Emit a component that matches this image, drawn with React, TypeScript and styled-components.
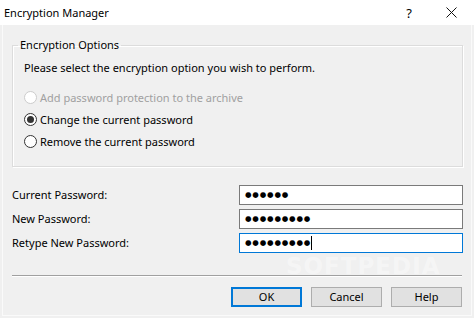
import React from "react";
import styled, { createGlobalStyle } from "styled-components";

const Global = createGlobalStyle`
  html, body { margin: 0; padding: 0; background: #f0f0f0; }
  body { font-family: "Noto Sans", "Open Sans", sans-serif; }
`;

const Window = styled.div`
  width: 474px;
  height: 318px;
  display: flex;
  flex-direction: column;
  background: #f0f0f0;
  font-family: "Noto Sans", sans-serif;
  font-size: 11px;
  color: #000;
  overflow: hidden;
  position: relative;
`;

const TitleBar = styled.div`
  height: 25px;
  flex: none;
  background: #fff;
  display: flex;
  align-items: center;
  padding-left: 4px;
`;

const Title = styled.div`
  flex: 1;
  font-size: 11px;
  line-height: 16px;
`;

const TitleButton = styled.div<{ $w: number }>`
  width: ${(p) => p.$w}px;
  height: 25px;
  display: flex;
  align-items: center;
  justify-content: center;
  font-size: 13px;
`;

const Body = styled.div`
  flex: 1;
  display: flex;
  flex-direction: column;
  padding: 13px 8px 0 9px;
  margin: 0 2px 2px 2px;
  border-left: 1px solid #fafafa;
  border-right: 1px solid #fafafa;
  border-bottom: 1px solid #fafafa;
`;

const Group = styled.fieldset`
  margin: 0;
  padding: 8px 10px 14px 11px;
  border: 1px solid #dcdcdc;
  box-shadow: inset 1px 1px 0 #fff, 1px 1px 0 #fff;
  display: flex;
  flex-direction: column;
`;

const Legend = styled.legend`
  padding: 0 2px;
  margin-left: -6px;
  line-height: 14px;
`;

const Description = styled.div`
  line-height: 16px;
  margin-bottom: 10px;
`;

const RadioRow = styled.div<{ $disabled?: boolean }>`
  height: 22px;
  display: flex;
  align-items: center;
  gap: 3px;
  color: ${(p) => (p.$disabled ? "#a0a0a0" : "#000")};
`;

const RadioCircle = styled.span<{ $disabled?: boolean; $checked?: boolean }>`
  width: 13px;
  height: 13px;
  box-sizing: border-box;
  border-radius: 50%;
  border: 1px solid ${(p) => (p.$disabled ? "#cccccc" : "#333")};
  background: #fff;
  display: flex;
  align-items: center;
  justify-content: center;
  &::after {
    content: "";
    width: 7px;
    height: 7px;
    border-radius: 50%;
    background: ${(p) => (p.$checked ? "#333" : "transparent")};
  }
`;

const Fields = styled.div`
  margin-top: 18px;
  display: grid;
  grid-template-columns: 227px 1fr;
  row-gap: 4px;
  align-items: center;
`;

const FieldLabel = styled.div`
  line-height: 16px;
`;

const PasswordBox = styled.div<{ $focused?: boolean }>`
  height: 20px;
  box-sizing: border-box;
  background: #fff;
  border: 1px solid ${(p) => (p.$focused ? "#0078d7" : "#7a7a7a")};
  display: flex;
  align-items: center;
  padding-left: 5px;
`;

const Dots = styled.span`
  font-family: "DejaVu Sans", sans-serif;
  font-size: 7.5px;
  letter-spacing: 0.8px;
  line-height: 10px;
`;

const Caret = styled.span`
  width: 1px;
  height: 14px;
  background: #000;
`;

const Separator = styled.div`
  margin-top: 22px;
  margin-right: 1px;
  height: 1px;
  background: #a0a0a0;
  border-bottom: 1px solid #fff;
`;

const ButtonRow = styled.div`
  margin-top: 10px;
  display: flex;
  justify-content: flex-end;
  gap: 9px;
  padding-right: 1px;
`;

const Button = styled.div<{ $default?: boolean }>`
  width: 71px;
  height: 20px;
  box-sizing: border-box;
  background: #e1e1e1;
  border: ${(p) => (p.$default ? "2px solid #0078d7" : "1px solid #adadad")};
  display: flex;
  align-items: center;
  justify-content: center;
  line-height: 16px;
`;

const Watermark = styled.div`
  position: absolute;
  left: 286px;
  top: 253px;
  font-family: "DejaVu Sans", sans-serif;
  font-weight: bold;
  font-size: 23px;
  letter-spacing: 1px;
  color: rgba(255, 255, 255, 0.4);
  pointer-events: none;
`;

const radios = [
  { label: "Add password protection to the archive", disabled: true, checked: false },
  { label: "Change the current password", disabled: false, checked: true },
  { label: "Remove the current password", disabled: false, checked: false },
];

const fields = [
  { label: "Current Password:", count: 6, focused: false },
  { label: "New Password:", count: 9, focused: false },
  { label: "Retype New Password:", count: 9, focused: true },
];

export default function App() {
  return (
    <>
      <Global />
      <Window>
        <TitleBar>
          <Title>Encryption Manager</Title>
          <TitleButton $w={38}>?</TitleButton>
          <TitleButton $w={46}>
            <svg width="11" height="11" viewBox="0 0 11 11">
              <path d="M0.5 0.5 L10.5 10.5 M10.5 0.5 L0.5 10.5" stroke="#111" strokeWidth="1" fill="none" />
            </svg>
          </TitleButton>
        </TitleBar>
        <Body>
          <Group>
            <Legend>Encryption Options</Legend>
            <Description>Please select the encryption option you wish to perform.</Description>
            {radios.map((r) => (
              <RadioRow key={r.label} $disabled={r.disabled}>
                <RadioCircle $disabled={r.disabled} $checked={r.checked} />
                <span>{r.label}</span>
              </RadioRow>
            ))}
          </Group>
          <Fields>
            {fields.map((f) => (
              <React.Fragment key={f.label}>
                <FieldLabel>{f.label}</FieldLabel>
                <PasswordBox $focused={f.focused}>
                  <Dots>{"●".repeat(f.count)}</Dots>
                  {f.focused && <Caret />}
                </PasswordBox>
              </React.Fragment>
            ))}
          </Fields>
          <Separator />
          <ButtonRow>
            <Button $default>OK</Button>
            <Button>Cancel</Button>
            <Button>Help</Button>
          </ButtonRow>
        </Body>
        <Watermark>SOFTPEDIA</Watermark>
      </Window>
    </>
  );
}
